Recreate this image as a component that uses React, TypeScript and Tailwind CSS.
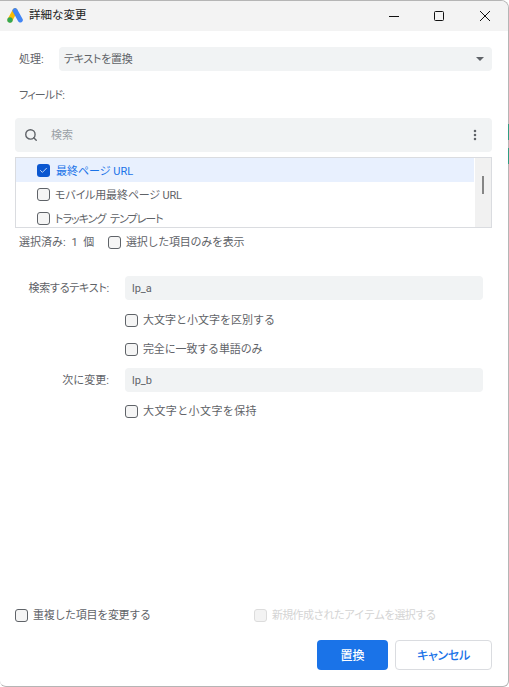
import React from 'react';
import { Search, Check, EllipsisVertical } from 'lucide-react';

const FONT = "font-['Roboto','Noto_Sans_CJK_JP',sans-serif]";
const PALT = "[font-feature-settings:'palt']";

const Box: React.FC<{ checked?: boolean; disabled?: boolean }> = ({ checked, disabled }) => {
  if (checked) {
    return (
      <span className="flex h-[13px] w-[13px] shrink-0 items-center justify-center rounded-[3px] bg-[#0b57d0]">
        <Check size={9} strokeWidth={2} className="text-white" />
      </span>
    );
  }
  return (
    <span
      className={
        disabled
          ? 'h-[13px] w-[13px] shrink-0 rounded-[3px] border border-[#dcdcdc] bg-[#f3f3f3]'
          : 'h-[13px] w-[13px] shrink-0 rounded-[3px] border border-[#5f6368] bg-[#f5f5f5]'
      }
    />
  );
};

const CheckRow: React.FC<{ label: string; className?: string; labelClass?: string; disabled?: boolean }> = ({ label, className, labelClass, disabled }) => (
  <div className={`flex h-[16px] items-center gap-[5px] text-[11px] leading-[16px] ${disabled ? 'text-[#d4d4d4]' : 'text-[#5f6368]'} ${className ?? ''}`}>
    <Box disabled={disabled} />
    <span className={`pt-[1px] ${labelClass ?? ''}`}>{label}</span>
  </div>
);

const ListRow: React.FC<{ label: string; labelClass: string }> = ({ label, labelClass }) => (
  <div className="flex h-[24px] items-center gap-[5px] pl-[21px] text-[11px] text-[#5f6368]">
    <Box />
    <span className={`pt-[4px] ${PALT} ${labelClass}`}>{label}</span>
  </div>
);

const TextRow: React.FC<{ label: string; value: string; labelClass?: string }> = ({ label, value, labelClass }) => (
  <div className="flex items-center">
    <div className={`w-[94px] pt-[3px] text-right text-[11px] text-[#5f6368] ${labelClass ?? ''}`}>{label}</div>
    <div className="ml-[16px] flex h-[24px] w-[358px] items-center rounded-[4px] bg-[#f1f3f4] px-[7px] pt-[3px] text-[11px] text-[#5f6368]">
      {value}
    </div>
  </div>
);

const App: React.FC = () => {
  return (
    <div className={`relative h-[687px] w-[509px] bg-white ${FONT}`}>
      <div className="flex h-[687px] w-[509px] flex-col overflow-hidden rounded-tr-[8px] rounded-br-[6px] rounded-bl-[6px] border-t border-r border-b border-[#b5b5b5] bg-white">
        {/* title bar */}
        <div className="flex h-[30px] shrink-0 items-center bg-[#f3f3f3]">
          <svg width="16" height="15" viewBox="0 0 16 15" className="ml-[7px] mt-[-1px]">
            <path d="M3 12 8 2.6" stroke="#fbbc04" strokeWidth="5" strokeLinecap="round" fill="none" />
            <path d="M8 2.6 13.3 12" stroke="#4285f4" strokeWidth="5" strokeLinecap="round" fill="none" />
            <circle cx="3" cy="12" r="2.7" fill="#34a853" />
          </svg>
          <span className="ml-[6px] text-[11.5px] text-[#222222]">詳細な変更</span>
          <div className="ml-auto flex items-center pr-[18px]">
            <svg width="10" height="10" viewBox="0 0 10 10" className="text-[#111111]">
              <path d="M0 5.5H10" stroke="currentColor" />
            </svg>
            <svg width="10" height="10" viewBox="0 0 10 10" className="ml-[35px] text-[#111111]">
              <rect x="0.5" y="0.5" width="9" height="9" rx="1" fill="none" stroke="currentColor" />
            </svg>
            <svg width="10" height="10" viewBox="0 0 10 10" className="ml-[36px] text-[#111111]">
              <path d="M0 0 10 10M10 0 0 10" stroke="currentColor" />
            </svg>
          </div>
        </div>

        {/* body */}
        <div className="flex flex-1 flex-col pl-[15px] pr-[16px]">
          <div className="mt-[16px] flex items-center">
            <span className="ml-[4px] w-[40px] pt-[2px] text-[11px] text-[#5f6368]">処理:</span>
            <div className="flex h-[24px] flex-1 items-center justify-between rounded-[4px] bg-[#f1f3f4] pl-[5px] pr-[8px] text-[11px] text-[#5f6368]">
              <span className={`pt-[2px] tracking-[-0.3px] ${PALT}`}>テキストを置換</span>
              <span className="h-0 w-0 border-x-[4px] border-t-[4px] border-x-transparent border-t-[#5f6368]" />
            </div>
          </div>

          <div className={`ml-[4px] mt-[17px] text-[11px] leading-[16px] tracking-[-0.8px] text-[#5f6368] ${PALT}`}>フィールド:</div>

          <div className="mt-[14px] flex h-[34px] items-center rounded-[4px] bg-[#f1f3f4] pl-[9px] pr-[12px]">
            <Search size={14} strokeWidth={2.4} className="text-[#5f6368]" />
            <span className="ml-[13px] pt-[2px] text-[11px] text-[#9aa0a6]">検索</span>
            <EllipsisVertical size={14} strokeWidth={2.4} className="ml-auto -mr-[2px] text-[#5f6368]" />
          </div>

          <div className="mt-[5px] flex h-[71px] overflow-hidden border border-[#dadce0]">
            <div className="min-w-0 flex-1">
              <div className="flex h-[24px] items-center gap-[6px] bg-[#e8f0fe] pl-[21px] text-[11px] text-[#1a73e8]">
                <Box checked />
                <span className={`pt-[4px] ${PALT}`}>最終ページ URL</span>
              </div>
              <ListRow label="モバイル用最終ページ URL" labelClass="tracking-[-0.15px]" />
              <ListRow label="トラッキング テンプレート" labelClass="tracking-[-1px] [word-spacing:3px]" />
            </div>
            <div className="ml-[1px] flex w-[16px] shrink-0 justify-center bg-[#f1f1f1] pt-[18px]">
              <div className="h-[18px] w-[2px] bg-[#858585]" />
            </div>
          </div>

          <div className="ml-[4px] mt-[6px] flex h-[16px] items-center text-[11px] leading-[16px] text-[#5f6368]">
            <span className="w-[89px] pt-[2px] [word-spacing:3px]">選択済み: 1 個</span>
            <CheckRow label="選択した項目のみを表示" labelClass="tracking-[-0.25px]" />
          </div>

          <div className="mt-[26px]">
            <TextRow label="検索するテキスト:" value="lp_a" labelClass={`tracking-[-0.25px] ${PALT}`} />
          </div>
          <CheckRow label="大文字と小文字を区別する" className="ml-[110px] mt-[12px]" />
          <CheckRow label="完全に一致する単語のみ" className="ml-[110px] mt-[13px]" labelClass="tracking-[-0.15px]" />
          <div className="mt-[11px]">
            <TextRow label="次に変更:" value="lp_b" />
          </div>
          <CheckRow label="大文字と小文字を保持" className="ml-[110px] mt-[11px]" labelClass="tracking-[0.4px]" />

          <div className="mt-auto flex items-center">
            <CheckRow label="重複した項目を変更する" className="w-[239px]" labelClass="tracking-[-0.3px]" />
            <CheckRow label="新規作成されたアイテムを選択する" disabled labelClass="tracking-[-0.7px]" />
          </div>

          <div className="mb-[16px] mt-[17px] flex justify-end gap-[7px]">
            <button className="h-[30px] w-[71px] rounded-[4px] bg-[#1a73e8] pt-[1px] text-[12px] font-medium text-white">置換</button>
            <button className={`h-[30px] w-[97px] rounded-[4px] border border-[#dadce0] bg-white pt-[1px] text-[12px] font-medium tracking-[-0.3px] text-[#1a73e8] ${PALT}`}>キャンセル</button>
          </div>
        </div>
      </div>
      {/* bits of the window behind */}
      <div className="absolute right-0 top-[124px] h-[16px] w-[1px] bg-[#2f9e84]" />
      <div className="absolute right-0 top-[148px] h-[16px] w-[1px] bg-[#2f9e84]" />
    </div>
  );
};

export default App;
